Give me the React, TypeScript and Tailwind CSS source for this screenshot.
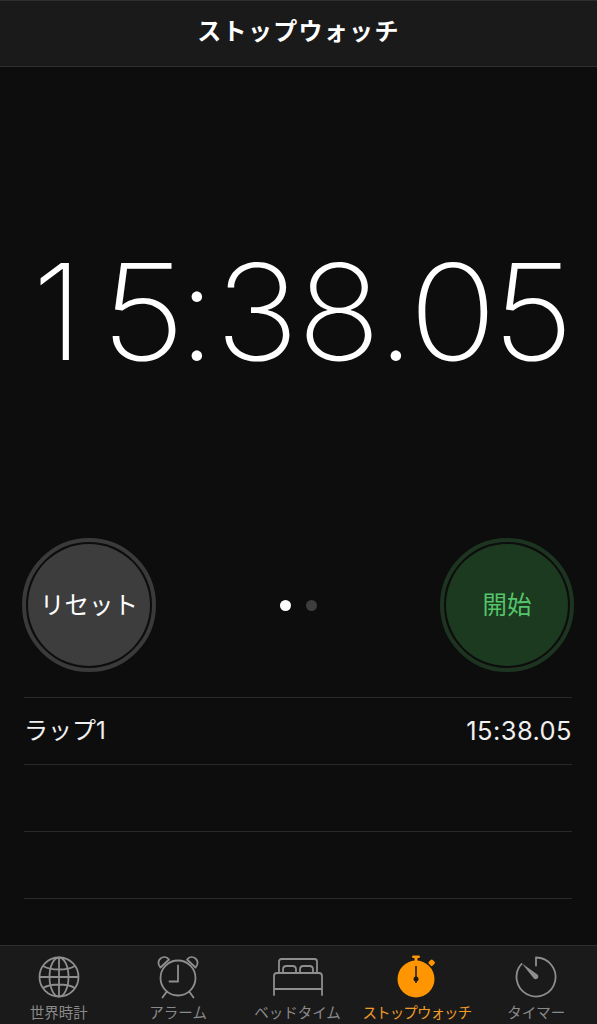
import React from 'react';

const cjk = 'font-["Inter","Noto_Sans_CJK_JP",sans-serif]';

const GlobeIcon = () => (
  <svg width="42" height="42" viewBox="0 0 42 42" fill="none" stroke="#8e8e8e" strokeWidth="1.8">
    <circle cx="21" cy="21" r="19.5" />
    <ellipse cx="21" cy="21" rx="9.5" ry="19.5" />
    <path d="M21 1.500v39M1.500 21h39M5 10c4 2.500 9.500 3.500 16 3.500S33 12.500 37 10M5 32c4-2.500 9.500-3.500 16-3.500S33 29.500 37 32" />
  </svg>
);

const AlarmIcon = () => (
  <svg width="42" height="44" viewBox="0 0 42 44" fill="none" stroke="#8e8e8e" strokeWidth="1.8" strokeLinecap="round" strokeLinejoin="round">
    <circle cx="21" cy="23" r="17.500" />
    <path d="M21 10.500V26.500H12.500M9.500 37l-4 5.500M32.500 37l4 5.500" />
    <path d="M3.500 12.500C.500 9.500 1 5.500 3.500 3.500S9.500 1.500 12 4.500zM38.500 12.500C41.500 9.500 41 5.500 38.500 3.500S32.500 1.500 30 4.500z" />
  </svg>
);

const BedIcon = () => (
  <svg width="50" height="38" viewBox="0 0 50 38" fill="none" stroke="#8e8e8e" strokeWidth="1.8" strokeLinejoin="round" strokeLinecap="round">
    <path d="M6 15V3.500C6 2 7 1 8.500 1h33C43 1 44 2 44 3.500V15" />
    <path d="M10 15v-3.500c0-2 1.500-3.500 3.500-3.500h6c2 0 3.500 1.500 3.500 3.500V15M27 15v-3.500c0-2 1.500-3.500 3.500-3.500h6c2 0 3.500 1.500 3.500 3.500V15" />
    <path d="M1 31V18c0-1.700 1.300-3 3-3h42c1.700 0 3 1.300 3 3v13zM1 31v6M49 31v6" />
  </svg>
);

const StopwatchIcon = () => (
  <svg width="40" height="44" viewBox="0 0 40 44">
    <circle cx="19" cy="24" r="18.500" fill="#ff9500" />
    <rect x="17.500" y="2" width="3" height="5" fill="#ff9500" />
    <rect x="15" y="0.500" width="8" height="2.500" rx="1.200" fill="#ff9500" />
    <rect x="32" y="5" width="5.500" height="5.500" rx="1.500" transform="rotate(45 34.700 7.700)" fill="#ff9500" />
    <path d="M19 11v17" stroke="#1a1a1a" strokeWidth="1.500" />
    <circle cx="19" cy="24" r="2.500" fill="#1a1a1a" />
  </svg>
);

const TimerIcon = () => (
  <svg width="42" height="42" viewBox="0 0 42 42" fill="none" stroke="#8e8e8e" strokeWidth="1.800" strokeLinecap="round">
    <path d="M21 1.500a19.500 19.500 0 1 1-14.500 6.500M21 1.500v8" />
    <path d="M7 7.500 L22.800 18.800 Q24 20.500 22.800 22.300 Q21 23.800 19 22.800 Z" fill="#8e8e8e" stroke="none" />
  </svg>
);

const tabs = [
  { label: '世界時計', icon: <GlobeIcon />, active: false },
  { label: 'アラーム', icon: <AlarmIcon />, active: false },
  { label: 'ベッドタイム', icon: <BedIcon />, active: false },
  { label: 'ストップウォッチ', icon: <StopwatchIcon />, active: true },
  { label: 'タイマー', icon: <TimerIcon />, active: false },
];

const glyphs = [
  { ch: '1', cls: 'ml-[0px]' },
  { ch: '5', cls: 'ml-[45px] scale-x-[1.1]' },
  { ch: ':', cls: 'ml-[14.5px]' },
  { ch: '3', cls: 'ml-[19.5px] scale-x-[1.06]' },
  { ch: '8', cls: 'ml-[42.5px] scale-x-[1.04]' },
  { ch: '.', cls: 'ml-[17px]' },
  { ch: '0', cls: 'ml-[16.5px] scale-x-[1.1]' },
  { ch: '5', cls: 'ml-[40px] scale-x-[1.06]' },
];

export default function App() {
  return (
    <div className={`w-[597px] h-[1024px] flex flex-col overflow-hidden bg-[#0d0d0d] text-white ${cjk}`}>
      <header className="h-[67px] shrink-0 flex items-center justify-center pb-[4px] bg-[#1a1a1a] border-t border-b border-[#2e2e2e]">
        <h1 className="text-[24px] font-bold tracking-[1.3px] text-white">ストップウォッチ</h1>
      </header>

      <div className="h-[471px] shrink-0 flex items-start pl-[37.5px] pt-[178px]">
        {glyphs.map((g, i) => (
          <span key={i} className={`w-[40px] shrink-0 flex justify-center text-[133px] leading-[1] font-[150] font-['Inter'] ${g.cls}`}>
            {g.ch}
          </span>
        ))}
      </div>

      <div className="h-[134px] shrink-0 flex items-center justify-between pl-[22px] pr-[23px]">
        <button className="w-[134px] h-[134px] rounded-full border-[4px] border-[#3a3a3a] p-[2px]">
          <span className="w-full h-full rounded-full bg-[#3d3d3d] flex items-center justify-center text-[24.5px] text-white">
            リセット
          </span>
        </button>
        <div className="flex items-center gap-[15px]">
          <span className="w-[11px] h-[11px] rounded-full bg-white" />
          <span className="w-[11px] h-[11px] rounded-full bg-[#3d3d3d]" />
        </div>
        <button className="w-[134px] h-[134px] rounded-full border-[4px] border-[#1d3520] p-[2px]">
          <span className="w-full h-full rounded-full bg-[#1b3a20] flex items-center justify-center text-[24.5px] text-[#55c46a]">
            開始
          </span>
        </button>
      </div>

      <div className="flex-1 pl-[24px] pr-[25px] pt-[25px]">
        <div className="h-[67px] flex items-center justify-between border-t border-[#2a2a2a] text-[24px] text-[#f0f0f0]">
          <span>ラップ1</span>
          <span className="text-[25.5px] tracking-[0.4px]">15:38.05</span>
        </div>
        <div className="h-[67px] border-t border-[#2a2a2a]" />
        <div className="h-[67px] border-t border-[#2a2a2a]" />
        <div className="border-t border-[#2a2a2a]" />
      </div>

      <nav className="h-[79px] shrink-0 flex bg-[#1a1a1a] border-t border-[#2e2e2e]">
        {tabs.map((tab) => (
          <div key={tab.label} className="flex-1 flex flex-col items-center justify-end pb-[1px] min-w-0 -translate-x-[1px]">
            <div className="h-[46px] mb-[3px] flex items-center justify-center">{tab.icon}</div>
            <span className={`text-[14.5px] leading-[20px] whitespace-nowrap ${tab.active ? 'text-[#f09a2a] tracking-[-0.9px]' : 'text-[#8a8a8a]'}`}>
              {tab.label}
            </span>
          </div>
        ))}
      </nav>
    </div>
  );
}
